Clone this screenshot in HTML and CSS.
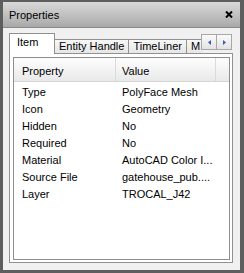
FILE: index.html
```html
<!DOCTYPE html>
<html lang="en">
<head>
    <meta charset="UTF-8">
    <meta name="viewport" content="width=device-width, initial-scale=1.0">
    <title>Properties</title>
    <link rel="stylesheet" href="styles.css">
</head>
<body>
    <div class="window">
        <div class="titlebar">
            <span class="title">Properties</span>
            <svg class="close" width="8" height="7" viewBox="0 0 8 7">
                <path d="M1 0.5 L7 6.5 M7 0.5 L1 6.5" stroke="#000" stroke-width="2"/>
            </svg>
        </div>

        <div class="content">
            <div class="tabs">
                <div class="tab active item-tab">Item</div>
                <div class="tab">Entity Handle</div>
                <div class="tab">TimeLiner</div>
                <div class="tab last-tab">M</div>

                <div class="scroll-buttons">
                    <div class="scroll-btn">
                        <svg width="3" height="5" viewBox="0 0 3 5"><path d="M3 0 L0 2.5 L3 5 Z" fill="#3a5bb8"/></svg>
                    </div>
                    <div class="scroll-btn">
                        <svg width="3" height="5" viewBox="0 0 3 5"><path d="M0 0 L3 2.5 L0 5 Z" fill="#3a5bb8"/></svg>
                    </div>
                </div>
            </div>

            <div class="panel">
                <div class="listview">
                    <div class="list-header">
                        <div class="col col-name">Property</div>
                        <div class="col col-value">Value</div>
                        <div class="col col-fill"></div>
                    </div>
                    <div class="list-body">
                        <div class="row"><span class="name">Type</span><span class="value">PolyFace Mesh</span></div>
                        <div class="row"><span class="name">Icon</span><span class="value">Geometry</span></div>
                        <div class="row"><span class="name">Hidden</span><span class="value">No</span></div>
                        <div class="row"><span class="name">Required</span><span class="value">No</span></div>
                        <div class="row"><span class="name">Material</span><span class="value">AutoCAD Color I...</span></div>
                        <div class="row"><span class="name">Source File</span><span class="value">gatehouse_pub....</span></div>
                        <div class="row"><span class="name">Layer</span><span class="value">TROCAL_J42</span></div>
                    </div>
                </div>
            </div>
        </div>
    </div>
</body>
</html>
```

FILE: styles.css
```css
body {
    margin: 0;
    padding: 0;
    font-family: "Liberation Sans", Arial, sans-serif;
    font-size: 11px;
    color: #000;
}

.window {
    width: 244px;
    height: 273px;
    box-sizing: border-box;
    display: flex;
    flex-direction: column;
    border-style: solid;
    border-color: #5e5e5e;
    border-width: 2px 4px 3px 3px;
    background: #f0f0f0;
}

.titlebar {
    height: 26px;
    box-sizing: border-box;
    display: flex;
    justify-content: space-between;
    align-items: flex-start;
    padding: 7px 7px 0 6px;
    background: linear-gradient(#d9d9d9, #a9a9a9);
    border-bottom: 1px solid #8a8a8a;
    line-height: 13px;
}

.close {
    margin-top: 2px;
}

.content {
    flex: 1;
    display: flex;
    flex-direction: column;
    padding: 5px 7px 7px 6px;
}

/* tab strip */
.tabs {
    position: relative;
    height: 21px;
    display: flex;
    align-items: flex-end;
    overflow: hidden;
    background: linear-gradient(#919191, #919191) bottom / 100% 1px no-repeat;
}

.tab {
    flex-shrink: 0;
    height: 14px;
    box-sizing: border-box;
    margin-bottom: 1px;
    margin-right: -1px;
    padding: 0 4px;
    line-height: 13px;
    border: 1px solid #919191;
    border-bottom: none;
    background: linear-gradient(#f7f7f7, #e6e6e6);
    white-space: nowrap;
}

.tab.active {
    position: relative;
    z-index: 1;
    height: 21px;
    margin-bottom: 0;
    padding-top: 2px;
    background: #fff;
}

.item-tab {
    width: 46px;
    padding-left: 7px;
}

.last-tab {
    padding-right: 30px;
}

.scroll-buttons {
    position: absolute;
    top: 1px;
    right: 1px;
    z-index: 2;
    display: flex;
    background: #f0f0f0;
    padding-bottom: 3px;
}

.scroll-btn {
    width: 16px;
    height: 16px;
    box-sizing: border-box;
    display: flex;
    align-items: center;
    justify-content: center;
    border: 1px solid #a7a7a7;
    background: linear-gradient(#fafafa, #e3e3e3);
    margin-left: -1px;
}

/* panel and list */
.panel {
    flex: 1;
    display: flex;
    flex-direction: column;
    padding: 3px 2px 2px 3px;
    background: #fff;
    border: 1px solid #919191;
    border-top: none;
}

.listview {
    flex: 1;
    border: 1px solid #8e8e8e;
    background: #fff;
}

.list-header {
    display: grid;
    grid-template-columns: 102px 100px 1fr;
    height: 24px;
    box-sizing: border-box;
    background: linear-gradient(#fdfdfd, #f1f1f1 60%, #e9e9e9);
    border-bottom: 1px solid #d5d5d5;
}

.col {
    padding-top: 7px;
    line-height: 13px;
    border-right: 1px solid #dadada;
}

.col-name {
    padding-left: 8px;
}

.col-value {
    padding-left: 6px;
}

.col-fill {
    border-right: none;
}

.list-body {
    padding-top: 2px;
}

.row {
    display: grid;
    grid-template-columns: 102px 1fr;
    line-height: 17px;
    white-space: nowrap;
}

.name {
    padding-left: 8px;
}

.value {
    padding-left: 6px;
}
```
